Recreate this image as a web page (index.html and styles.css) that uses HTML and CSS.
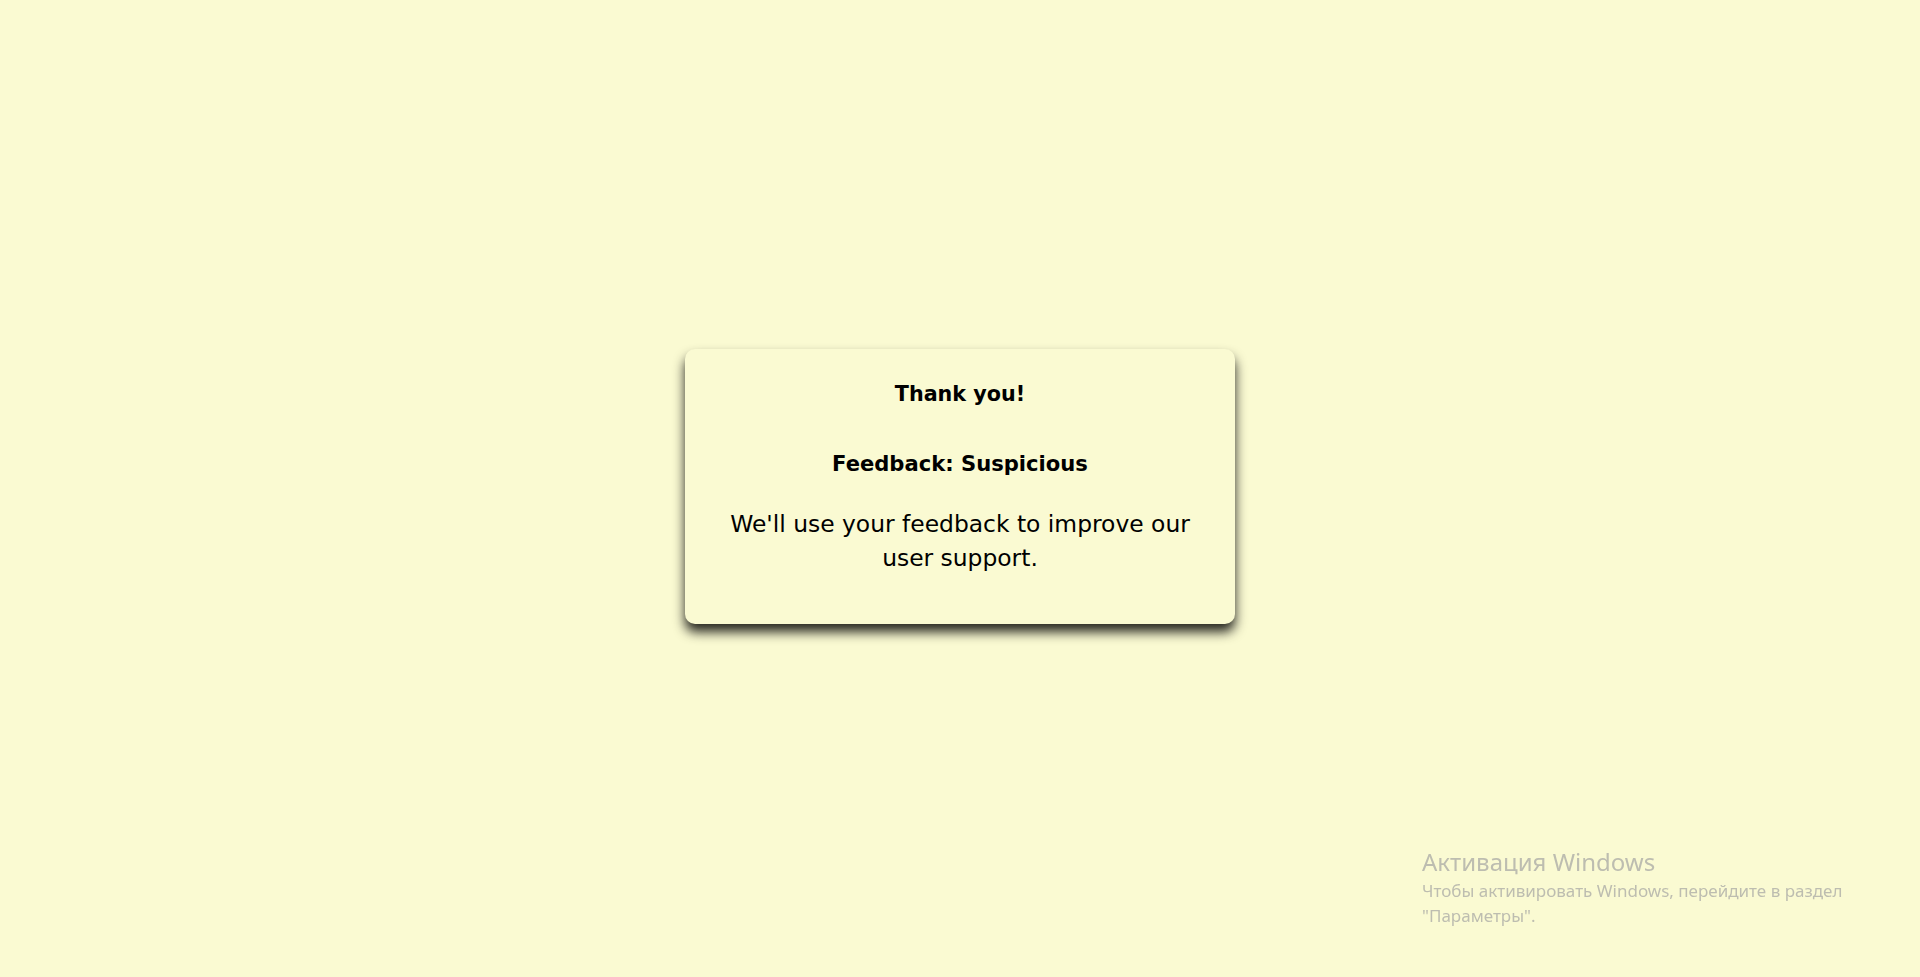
FILE: index.html
```html
<!DOCTYPE html>
<html lang="en">
<head>
<meta charset="utf-8">
<title>Thank you</title>
<link rel="stylesheet" href="styles.css">
</head>
<body>
<main class="page">
  <section class="card">
    <h2 class="title">Thank you!</h2>
    <h2 class="feedback">Feedback: Suspicious</h2>
    <p class="message">We'll use your feedback to improve our user support.</p>
  </section>
</main>
<div class="watermark">
  <div class="wm-title">Активация Windows</div>
  <div class="wm-text">Чтобы активировать Windows, перейдите в раздел<br>"Параметры".</div>
</div>
</body>
</html>
```

FILE: styles.css
```css
html, body {
  margin: 0;
  padding: 0;
  height: 100%;
}

body {
  background: #fafad2;
  font-family: "Comic Sans MS", "DejaVu Sans", sans-serif;
  color: #000;
}

.page {
  height: 100%;
  display: flex;
  align-items: center;
  justify-content: center;
}

.card {
  box-sizing: border-box;
  width: 550px;
  height: 275px;
  margin-bottom: 4px;
  padding: 28px 40px 0;
  background: #fafad2;
  border-radius: 10px;
  box-shadow: 0 8px 12px rgba(0, 0, 0, 0.85);
  text-align: center;
}

.title,
.feedback {
  margin: 0;
  font-size: 20.7px;
  line-height: 34px;
  font-weight: bold;
}

.feedback {
  margin-top: 36px;
  font-size: 21.1px;
}

.message {
  margin: 26px 0 0;
  font-size: 23.4px;
  line-height: 34px;
}

.watermark {
  position: fixed;
  left: 1422px;
  top: 845px;
  color: #bdbdb0;
  font-family: "Noto Sans", "Open Sans", sans-serif;
}

.wm-title {
  font-size: 24px;
  line-height: 33px;
}

.wm-text {
  font-size: 17px;
  line-height: 25px;
}
```
